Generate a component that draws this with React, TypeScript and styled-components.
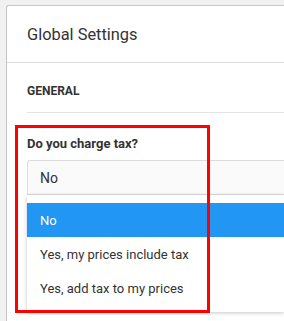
import React from "react";
import styled, { createGlobalStyle } from "styled-components";

const Global = createGlobalStyle`
  html, body {
    margin: 0;
    padding: 0;
    background: #f1f1f1;
    overflow: hidden;
  }
  body {
    font-family: Roboto, "Liberation Sans", sans-serif;
    color: #333;
  }
`;

const Page = styled.div`
  position: relative;
  padding: 5px 0 0 6px;
  height: 321px;
  box-sizing: border-box;
  display: flex;
  flex-direction: column;
`;

const Card = styled.div`
  flex: 1;
  background: #fff;
  border: 1px solid #c6c6c6;
  border-right: none;
  border-bottom: none;
  border-radius: 3px 0 0 0;
  box-sizing: border-box;
  overflow: hidden;
`;

const CardHeader = styled.div`
  height: 57px;
  display: flex;
  align-items: center;
  padding: 0 20px;
  font-size: 16.4px;
  color: #333;
  border-bottom: 1px solid #dedede;
  box-sizing: border-box;
`;

const Section = styled.div`
  padding: 0 0 0 20px;
`;

const SectionTitle = styled.div`
  padding: 20px 0 13px;
  font-size: 12px;
  line-height: 16px;
  font-weight: 700;
  text-transform: uppercase;
  color: #333;
  border-bottom: 1px solid #e3e3e3;
`;

const Field = styled.div`
  padding-top: 22px;
  display: flex;
  flex-direction: column;
`;

const Label = styled.label`
  font-size: 13px;
  line-height: 18px;
  font-weight: 700;
  color: #333;
  margin-bottom: 7px;
`;

const Select = styled.div`
  height: 35px;
  display: flex;
  align-items: center;
  padding: 0 12px;
  background: #fafafa;
  border: 1px solid #dcdcdc;
  border-right: none;
  border-radius: 3px 0 0 0;
  font-size: 14px;
  color: #333;
  box-sizing: border-box;
`;

const Menu = styled.ul`
  list-style: none;
  margin: 0;
  padding: 8px 0 7px;
  background: #fff;
  box-shadow: 0 1px 4px rgba(0, 0, 0, 0.22);
`;

const Option = styled.li<{ $active?: boolean }>`
  height: 34px;
  display: flex;
  align-items: center;
  padding: 0 13px;
  font-size: 13px;
  background: ${(p) => (p.$active ? "#2196f3" : "#fff")};
  color: ${(p) => (p.$active ? "#fff" : "#333")};
`;

const Highlight = styled.div`
  position: absolute;
  left: 15px;
  top: 125px;
  width: 195px;
  height: 188px;
  border: 3px solid #ff0000;
  box-sizing: border-box;
  pointer-events: none;
`;

const options = ["No", "Yes, my prices include tax", "Yes, add tax to my prices"];

export default function App() {
  return (
    <>
      <Global />
      <Page>
        <Card>
          <CardHeader>Global Settings</CardHeader>
          <Section>
            <SectionTitle>General</SectionTitle>
            <Field>
              <Label>Do you charge tax?</Label>
              <Select>No</Select>
              <Menu>
                {options.map((o, i) => (
                  <Option key={o} $active={i === 0}>
                    {o}
                  </Option>
                ))}
              </Menu>
            </Field>
          </Section>
        </Card>
        <Highlight />
      </Page>
    </>
  );
}
